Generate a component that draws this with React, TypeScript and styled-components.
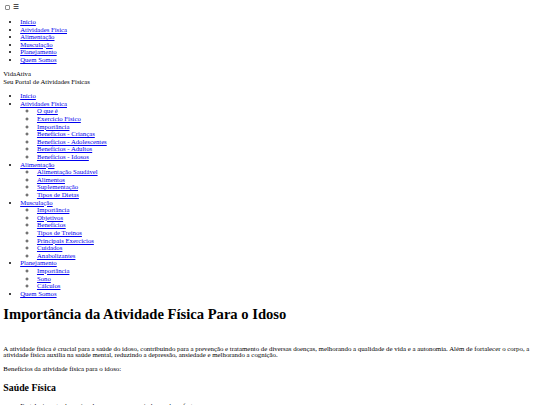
import React from "react";
import styled, { createGlobalStyle } from "styled-components";

const S = 0.42;
const px = (n: number) => `${(n * S).toFixed(2)}px`;
const LINE = "7.6px";

const GlobalStyle = createGlobalStyle`
  html, body {
    background: #fff;
  }
  body {
    margin: ${px(8)};
    font-family: "Liberation Serif", "Times New Roman", serif;
    font-size: ${px(16)};
    line-height: ${LINE};
    color: #000;
  }
`;

interface MenuItem {
  label: string;
  children?: string[];
}

const quickMenu = [
  "Início",
  "Atividades Física",
  "Alimentação",
  "Musculação",
  "Planejamento",
  "Quem Somos",
];

const mainMenu: MenuItem[] = [
  { label: "Início" },
  {
    label: "Atividades Física",
    children: [
      "O que é",
      "Exercício Físico",
      "Importância",
      "Benefícios - Crianças",
      "Benefícios - Adolescentes",
      "Benefícios - Adultos",
      "Benefícios - Idosos",
    ],
  },
  {
    label: "Alimentação",
    children: ["Alimentação Saudável", "Alimentos", "Suplementação", "Tipos de Dietas"],
  },
  {
    label: "Musculação",
    children: [
      "Importância",
      "Objetivos",
      "Benefícios",
      "Tipos de Treinos",
      "Principais Exercícios",
      "Cuidados",
      "Anabolizantes",
    ],
  },
  {
    label: "Planejamento",
    children: ["Importância", "Sono", "Cálculos"],
  },
  { label: "Quem Somos" },
];

const App: React.FC = () => {
  return (
    <>
      <GlobalStyle />
      <Header>
        <MenuToggle>
          <Checkbox type="checkbox" id="menu-toggle" />
          <Burger htmlFor="menu-toggle">☰</Burger>
        </MenuToggle>
        <MenuList>
          {quickMenu.map((item) => (
            <Item key={item}>
              <NavLink href="#">{item}</NavLink>
            </Item>
          ))}
        </MenuList>
        <Brand>
          <div>VidaAtiva</div>
          <div>Seu Portal de Atividades Físicas</div>
        </Brand>
        <nav>
          <MenuList>
            {mainMenu.map((item) => (
              <Item key={item.label}>
                <NavLink href="#">{item.label}</NavLink>
                {item.children && (
                  <MenuList $nested>
                    {item.children.map((child) => (
                      <Item key={child} $nested>
                        <NavLink href="#">{child}</NavLink>
                      </Item>
                    ))}
                  </MenuList>
                )}
              </Item>
            ))}
          </MenuList>
        </nav>
      </Header>
      <main>
        <Title>Importância da Atividade Física Para o Idoso</Title>
        <Text>
          A atividade física é crucial para a saúde do idoso, contribuindo para a
          prevenção e tratamento de diversas doenças, melhorando a qualidade de vida e a
          autonomia. Além de fortalecer o corpo, a atividade física auxilia na saúde
          mental, reduzindo a depressão, ansiedade e melhorando a cognição.
        </Text>
        <Text>Benefícios da atividade física para o idoso:</Text>
        <Subtitle>Saúde Física</Subtitle>
        <BenefitList>
          <li>Fortalecimento dos músculos e ossos, prevenindo quedas e fraturas.</li>
        </BenefitList>
      </main>
    </>
  );
};

const Header = styled.header`
  display: block;
`;

const MenuToggle = styled.div`
  display: flex;
  align-items: center;
  gap: 2.5px;
  height: 8px;
  padding-left: 1.6px;
`;

const Checkbox = styled.input`
  appearance: none;
  box-sizing: border-box;
  width: 5.5px;
  height: 5.5px;
  margin: 0;
  border: 0.8px solid #8a8a8a;
  border-radius: 1px;
  background: #fff;
`;

const Burger = styled.label`
  font-family: "DejaVu Sans", sans-serif;
  font-size: ${px(16)};
  line-height: 1;
  color: #222;
`;

const MenuList = styled.ul<{ $nested?: boolean }>`
  margin: ${(p) => (p.$nested ? "0" : `${px(16)} 0`)};
  padding-left: ${px(40)};
  list-style: ${(p) => (p.$nested ? "circle" : "disc")};
`;

const Item = styled.li<{ $nested?: boolean }>`
  line-height: ${LINE};

  &::marker {
    font-size: ${(p) => (p.$nested ? "7.4px" : "inherit")};
    color: ${(p) => (p.$nested ? "#444" : "#000")};
  }
`;

const NavLink = styled.a`
  color: #0000ee;
  text-decoration: underline;
`;

const Brand = styled.div`
  display: block;
`;

const Title = styled.h1`
  font-size: 14.6px;
  line-height: 16.2px;
  font-weight: bold;
  margin: 8.7px 0 24px;
`;

const Text = styled.p`
  font-size: 6.85px;
  line-height: 6px;
  margin: 8px 0;
`;

const Subtitle = styled.h2`
  font-size: 9.8px;
  line-height: 10.6px;
  font-weight: bold;
  margin: 10.7px 0 9.7px;
`;

const BenefitList = styled.ul`
  margin: 8px 0;
  padding-left: ${px(40)};
  font-size: 6.85px;
  line-height: 6px;
`;

export default App;
